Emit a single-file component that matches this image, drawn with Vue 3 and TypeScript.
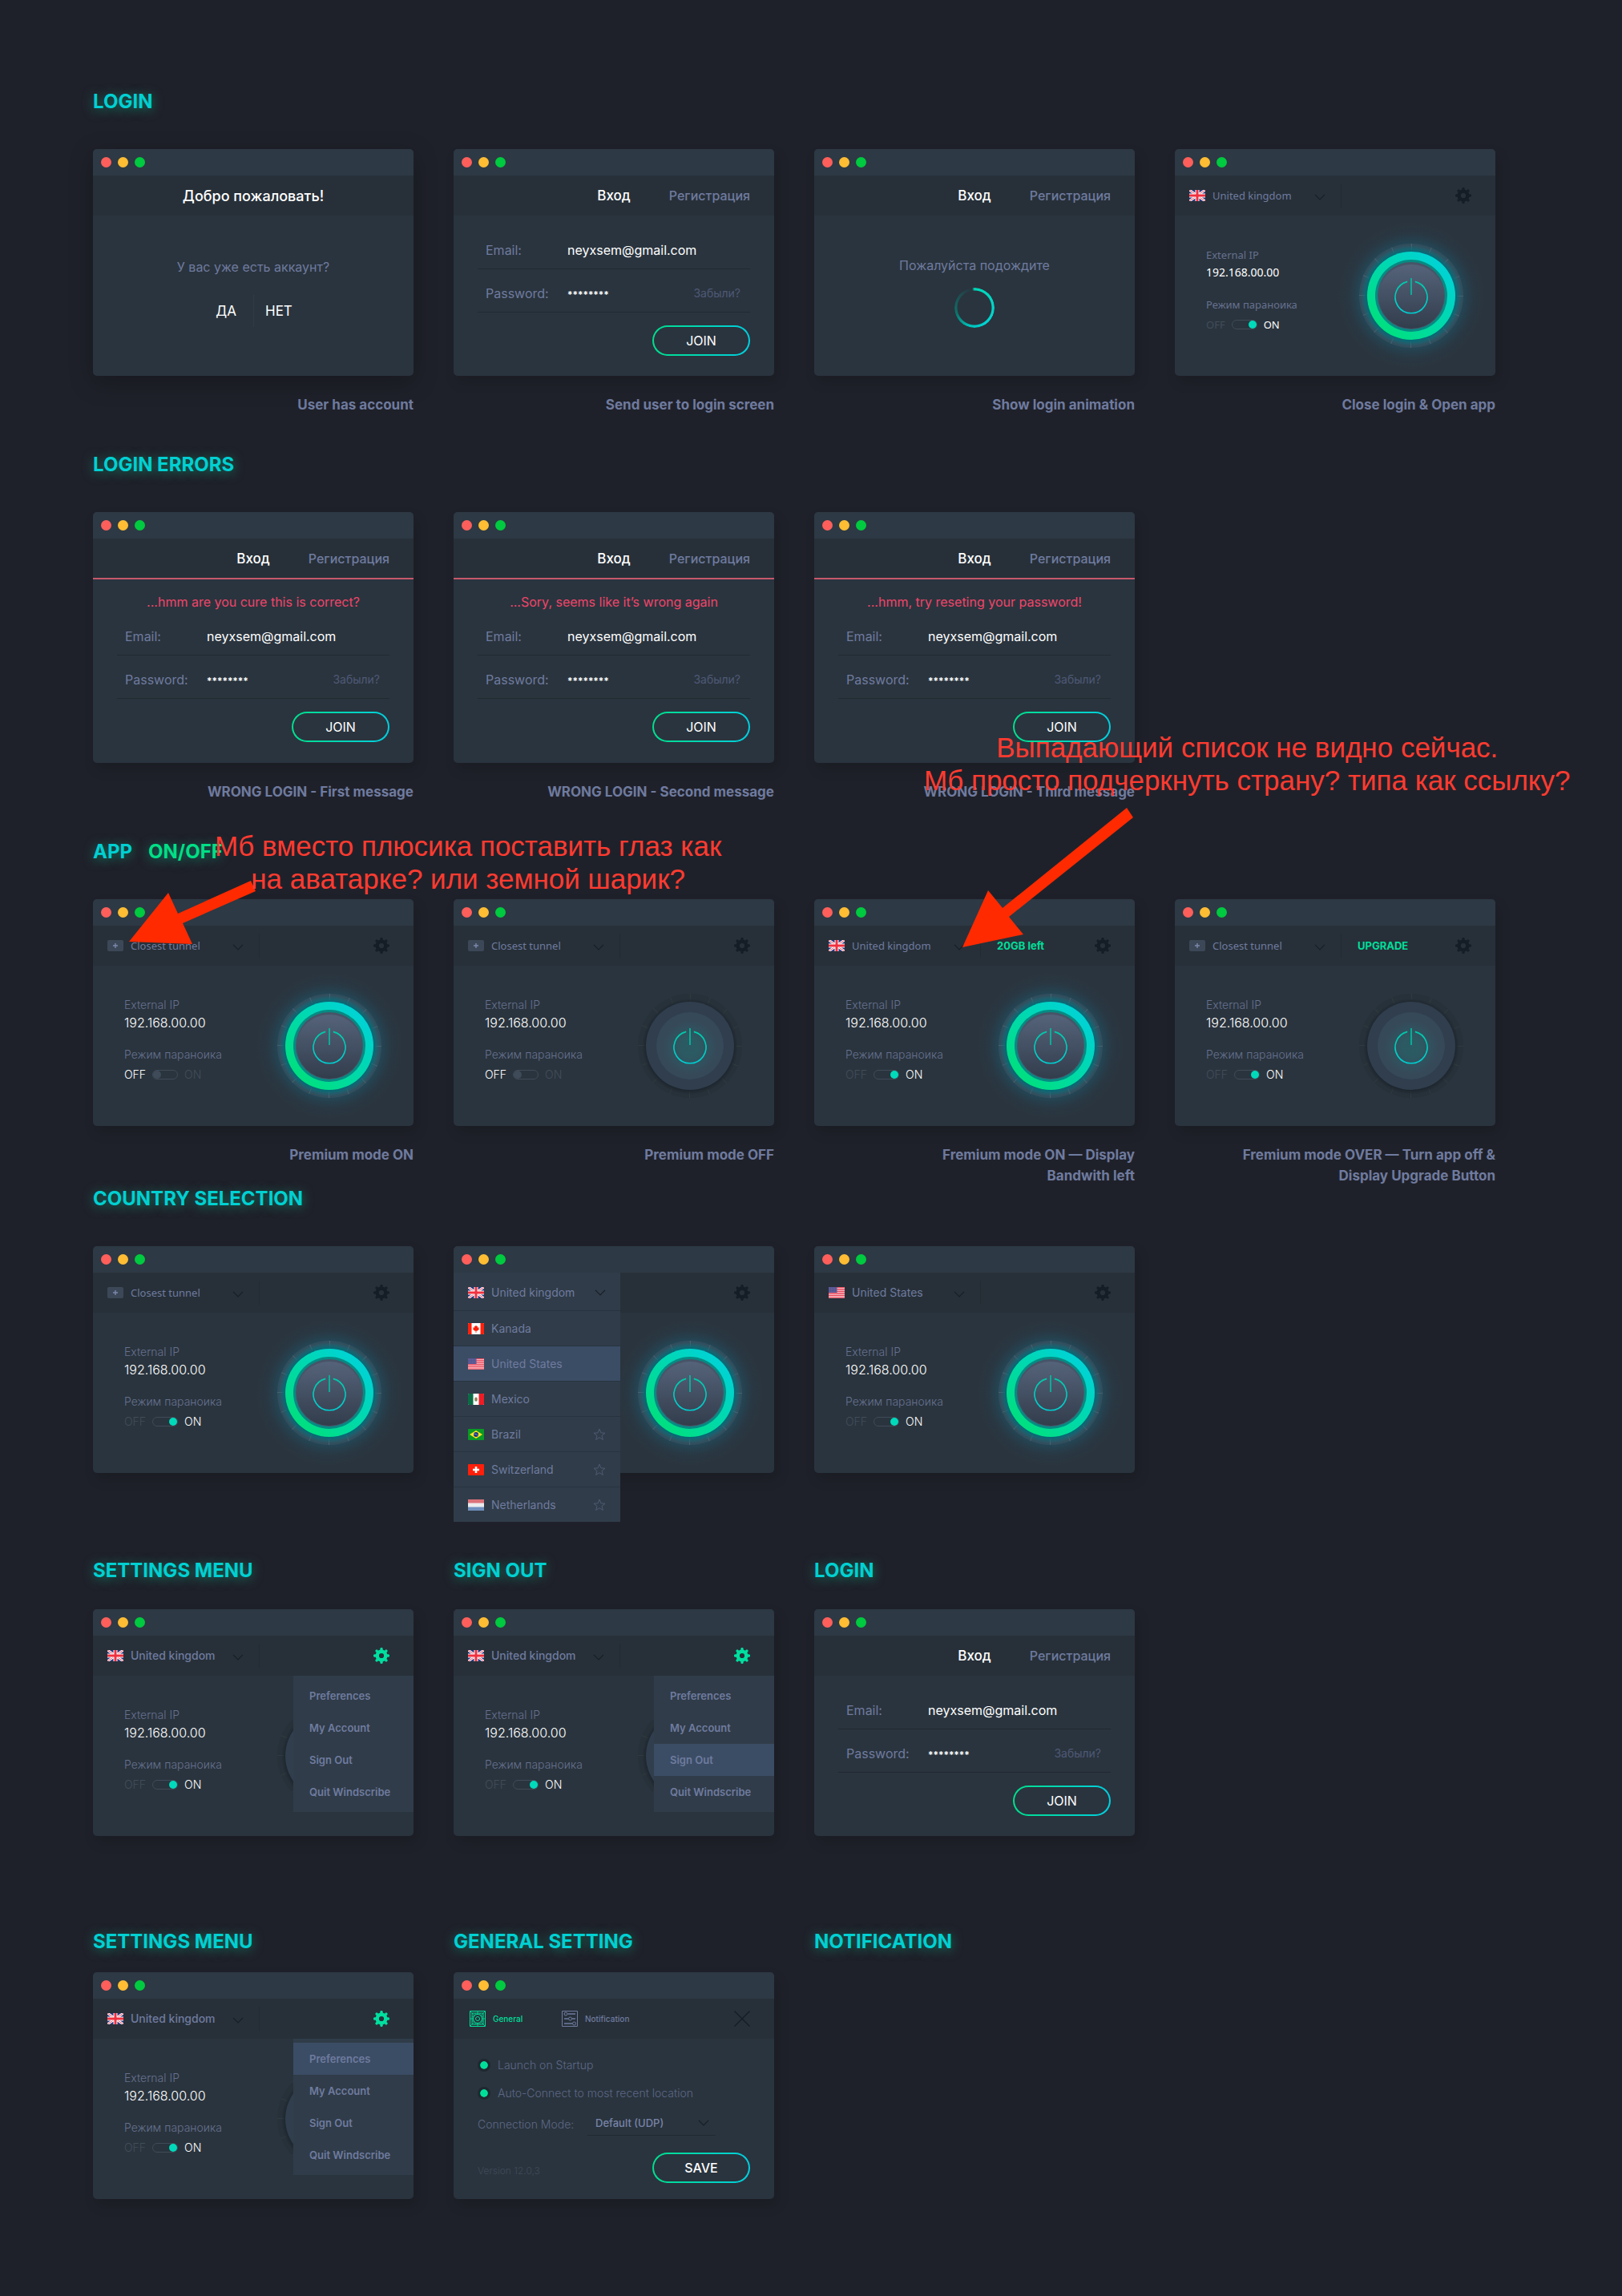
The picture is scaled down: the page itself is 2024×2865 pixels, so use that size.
<script setup lang="ts">
type Kind = 'welcome' | 'form' | 'loading' | 'app' | 'prefs'
type Note = 'plus' | 'country'

interface Win {
  id: string
  kind: Kind
  caption?: string
  error?: string
  flag?: string
  country?: string
  humanist?: boolean
  humanistLabel?: boolean
  semibold?: boolean
  power?: boolean
  paranoid?: boolean
  badge?: string
  settings?: boolean
  active?: string
  picker?: boolean
  note?: Note
}

interface Title {
  text: string
  accent?: string
}

interface Board {
  id: string
  cls: string
  titles: Title[]
  windows: Win[]
}

const menuItems: string[] = ['Preferences', 'My Account', 'Sign Out', 'Quit Windscribe']

const countries = [
  { flag: 'gb', name: 'United kingdom', star: false },
  { flag: 'ca', name: 'Kanada', star: false },
  { flag: 'us', name: 'United States', star: false },
  { flag: 'mx', name: 'Mexico', star: false },
  { flag: 'br', name: 'Brazil', star: true },
  { flag: 'ch', name: 'Switzerland', star: true },
  { flag: 'nl', name: 'Netherlands', star: true },
]

const boards: Board[] = [
  {
    id: 'login',
    cls: 'roomy',
    titles: [{ text: 'LOGIN' }],
    windows: [
      { id: 'w1', kind: 'welcome', caption: 'User has account' },
      { id: 'w2', kind: 'form', caption: 'Send user to login screen' },
      { id: 'w3', kind: 'loading', caption: 'Show login animation' },
      { id: 'w4', kind: 'app', caption: 'Close login & Open app', flag: 'gb', country: 'United kingdom', humanist: true, power: true, paranoid: true },
    ],
  },
  {
    id: 'errors',
    cls: 'roomy',
    titles: [{ text: 'LOGIN ERRORS' }],
    windows: [
      { id: 'e1', kind: 'form', error: '...hmm are you cure this is correct?', caption: 'WRONG LOGIN - First message' },
      { id: 'e2', kind: 'form', error: '...Sory, seems like it’s wrong again', caption: 'WRONG LOGIN - Second message' },
      { id: 'e3', kind: 'form', error: '...hmm, try reseting your password!', caption: 'WRONG LOGIN - Third message' },
    ],
  },
  {
    id: 'app',
    cls: 'tight',
    titles: [{ text: 'APP', accent: 'ON/OFF' }],
    windows: [
      { id: 'a1', kind: 'app', caption: 'Premium mode ON', flag: 'plus', country: 'Closest tunnel', humanistLabel: true, power: true, note: 'plus' },
      { id: 'a2', kind: 'app', caption: 'Premium mode OFF', flag: 'plus', country: 'Closest tunnel', humanistLabel: true },
      { id: 'a3', kind: 'app', caption: 'Fremium mode ON — Display Bandwith left', flag: 'gb', country: 'United kingdom', humanistLabel: true, power: true, paranoid: true, badge: '20GB left', note: 'country' },
      { id: 'a4', kind: 'app', caption: 'Fremium mode OVER — Turn app off & Display Upgrade Button', flag: 'plus', country: 'Closest tunnel', humanistLabel: true, paranoid: true, badge: 'UPGRADE' },
    ],
  },
  {
    id: 'country',
    cls: 'wide',
    titles: [{ text: 'COUNTRY SELECTION' }],
    windows: [
      { id: 'c1', kind: 'app', flag: 'plus', country: 'Closest tunnel', humanistLabel: true, power: true, paranoid: true },
      { id: 'c2', kind: 'app', flag: 'gb', country: 'United kingdom', power: true, paranoid: true, picker: true },
      { id: 'c3', kind: 'app', flag: 'us', country: 'United States', power: true, paranoid: true },
    ],
  },
  {
    id: 'signout',
    cls: 'wide near',
    titles: [{ text: 'SETTINGS MENU' }, { text: 'SIGN OUT' }, { text: 'LOGIN' }],
    windows: [
      { id: 's1', kind: 'app', flag: 'gb', country: 'United kingdom', semibold: true, paranoid: true, settings: true },
      { id: 's2', kind: 'app', flag: 'gb', country: 'United kingdom', semibold: true, paranoid: true, settings: true, active: 'Sign Out' },
      { id: 's3', kind: 'form' },
    ],
  },
  {
    id: 'general',
    cls: 'wide nearest',
    titles: [{ text: 'SETTINGS MENU' }, { text: 'GENERAL SETTING' }, { text: 'NOTIFICATION' }],
    windows: [
      { id: 'g1', kind: 'app', flag: 'gb', country: 'United kingdom', semibold: true, paranoid: true, settings: true, active: 'Preferences' },
      { id: 'g2', kind: 'prefs' },
    ],
  },
]
</script>

<template>
  <main class="page">
    <svg class="sprite" aria-hidden="true">
      <defs>
        <linearGradient id="ring-on" x1="0.2" y1="0.9" x2="0.85" y2="0.2">
          <stop offset="0" stop-color="#00df80" />
          <stop offset="1" stop-color="#00d3d2" />
        </linearGradient>
        <linearGradient id="disc-on" x1="0" y1="0" x2="0" y2="1">
          <stop offset="0" stop-color="#55637a" />
          <stop offset="1" stop-color="#323d4c" />
        </linearGradient>
        <linearGradient id="glyph" gradientUnits="userSpaceOnUse" x1="65" y1="42" x2="65" y2="88">
          <stop offset="0" stop-color="#00c9a4" />
          <stop offset="1" stop-color="#00cfd2" />
        </linearGradient>
        <radialGradient id="halo">
          <stop offset="0.6" stop-color="#16788f" stop-opacity="0.6" />
          <stop offset="0.72" stop-color="#1b6078" stop-opacity="0.36" />
          <stop offset="0.86" stop-color="#205568" stop-opacity="0.1" />
          <stop offset="1" stop-color="#205568" stop-opacity="0" />
        </radialGradient>
        <radialGradient id="rim">
          <stop offset="0.84" stop-color="#00636f" />
          <stop offset="0.9" stop-color="#006f7b" stop-opacity="0.7" />
          <stop offset="1" stop-color="#14707c" stop-opacity="0" />
        </radialGradient>
        <radialGradient id="rim-off">
          <stop offset="0.88" stop-color="#1b232b" />
          <stop offset="1" stop-color="#1b232b" stop-opacity="0" />
        </radialGradient>
        <radialGradient id="tint">
          <stop offset="0.3" stop-color="#00a08c" stop-opacity="0.2" />
          <stop offset="1" stop-color="#00a08c" stop-opacity="0" />
        </radialGradient>
        <clipPath id="flag-clip"><rect width="20" height="14" rx="1" /></clipPath>
      </defs>

      <symbol id="flag-gb" viewBox="0 0 20 14">
        <g clip-path="url(#flag-clip)">
          <rect width="20" height="14" fill="#28377f" />
          <path d="M0 0 20 14M20 0 0 14" stroke="#fff" stroke-width="3" />
          <path d="M0 0 20 14M20 0 0 14" stroke="#f0465a" stroke-width="1" />
          <path d="M10 0V14M0 7H20" stroke="#fff" stroke-width="5" />
          <path d="M10 0V14M0 7H20" stroke="#f0303f" stroke-width="3" />
        </g>
      </symbol>
      <symbol id="flag-ca" viewBox="0 0 20 14">
        <g clip-path="url(#flag-clip)">
          <rect width="20" height="14" fill="#fff" />
          <path d="M0 0H4.500V14H0zM15.500 0H20V14H15.500z" fill="#ff1f0a" />
          <path d="m10 2.500 1 1.800 1.200-.5-.3 2.200 1.900-.9-.5 2 .7.700-2.600 2H10.400V12H9.600V9.800H8.600L6 7.800l.7-.7-.5-2 1.900.9-.3-2.200 1.200.5z" fill="#ff1f0a" />
        </g>
      </symbol>
      <symbol id="flag-us" viewBox="0 0 20 14">
        <g clip-path="url(#flag-clip)">
          <rect width="20" height="14" fill="#fbd5da" />
          <path d="M0 .5H20M0 3H20M0 5.500H20M0 8H20M0 10.500H20M0 13.200H20" stroke="#e9475a" stroke-width="1.300" />
          <rect width="10.500" height="7" fill="#565490" />
          <path d="M1 1.500H10M1 3.500H10M1 5.500H10" stroke="#8684b5" stroke-width=".6" stroke-dasharray=".7 1.300" />
        </g>
      </symbol>
      <symbol id="flag-mx" viewBox="0 0 20 14">
        <g clip-path="url(#flag-clip)">
          <rect width="20" height="14" fill="#fff" />
          <rect width="6.500" height="14" fill="#0b6b45" />
          <rect x="13.500" width="6.500" height="14" fill="#ee1c25" />
          <ellipse cx="10" cy="7" rx="1.800" ry="2.400" fill="#9c7a54" />
          <path d="M8.600 8.500Q10 10 11.400 8.500" fill="none" stroke="#4b8a52" stroke-width=".8" />
        </g>
      </symbol>
      <symbol id="flag-br" viewBox="0 0 20 14">
        <g clip-path="url(#flag-clip)">
          <rect width="20" height="14" fill="#0a9a25" />
          <path d="M10 2 18 7 10 12 2 7z" fill="#ffe51e" />
          <circle cx="10" cy="7" r="3" fill="#17357f" />
          <path d="M7.200 6.300Q10 6 12.600 8" fill="none" stroke="#a9c4ee" stroke-width=".6" />
        </g>
      </symbol>
      <symbol id="flag-ch" viewBox="0 0 20 14">
        <g clip-path="url(#flag-clip)">
          <rect width="20" height="14" fill="#ff1f0a" />
          <path d="M10 3V11M6 7H14" stroke="#fff" stroke-width="2.600" />
        </g>
      </symbol>
      <symbol id="flag-nl" viewBox="0 0 20 14">
        <g clip-path="url(#flag-clip)">
          <rect width="20" height="14" fill="#ecebed" />
          <rect width="20" height="4.500" fill="#dc7179" />
          <rect y="9.500" width="20" height="4.500" fill="#6f8fbd" />
        </g>
      </symbol>
      <symbol id="flag-plus" viewBox="0 0 20 14">
        <rect width="20" height="14" rx="2" fill="#3c4857" />
        <path d="M10 4V10M7 7H13" stroke="#7c88ac" stroke-width="1.400" />
      </symbol>
      <symbol id="chevron" viewBox="0 0 14 8">
        <path d="m1 .8 6 6 6-6" fill="none" stroke="currentColor" stroke-width="1.200" />
      </symbol>
      <symbol id="gear" viewBox="0 0 20 20">
        <circle cx="10" cy="10" r="5.300" fill="none" stroke="currentColor" stroke-width="4.400" />
        <path
          d="M10 1.600V4M10 16V18.400M1.600 10H4M16 10H18.400M4.100 4.100l1.600 1.600M14.300 14.300l1.600 1.600M4.100 15.900l1.600-1.600M14.300 5.700l1.600-1.600"
          stroke="currentColor" stroke-width="3.400" stroke-linecap="round"
        />
      </symbol>
      <symbol id="star" viewBox="0 0 16 16">
        <path d="m8 1 1.900 4.900 5.100.3-4 3.300 1.400 5L8 11.700l-4.400 2.800 1.400-5-4-3.300 5.100-.3z" fill="none" stroke="currentColor" />
      </symbol>
    </svg>

    <section v-for="board in boards" :key="board.id" class="board" :class="board.cls">
      <div class="grid titles">
        <h2 v-for="title in board.titles" :key="title.text" class="title">
          {{ title.text }}<span v-if="title.accent" class="accent">{{ title.accent }}</span>
        </h2>
      </div>

      <div class="grid">
        <figure v-for="win in board.windows" :key="win.id" class="cell">
          <div class="window" :class="{ failed: win.error, lifted: win.kind === 'welcome', picking: win.picker }">
            <div class="bar"><i class="dot red" /><i class="dot amber" /><i class="dot green" /></div>

            <template v-if="win.kind === 'welcome'">
              <header class="head centered"><h3 class="welcome">Добро пожаловать!</h3></header>
              <div class="body stack">
                <p class="question">У вас уже есть аккаунт?</p>
                <div class="choices">
                  <button type="button">ДА</button>
                  <button type="button">НЕТ</button>
                </div>
              </div>
            </template>

            <template v-if="win.kind === 'form' || win.kind === 'loading'">
              <header class="head tabs">
                <a href="#login" class="tab current">Вход</a>
                <a href="#signup" class="tab">Регистрация</a>
              </header>
            </template>

            <div v-if="win.kind === 'loading'" class="body stack loading">
              <p class="question">Пожалуйста подождите</p>
              <div class="spinner" role="status" aria-label="Пожалуйста подождите" />
            </div>

            <form v-if="win.kind === 'form'" class="body form" @submit.prevent>
              <p v-if="win.error" class="error">{{ win.error }}</p>
              <div class="field">
                <label :for="win.id + '-email'">Email:</label>
                <input :id="win.id + '-email'" type="text" value="neyxsem@gmail.com">
              </div>
              <div class="field">
                <label :for="win.id + '-pass'">Password:</label>
                <input :id="win.id + '-pass'" class="secret" type="text" value="********">
                <a href="#forgot" class="forgot">Забыли?</a>
              </div>
              <button type="submit" class="pill">JOIN</button>
            </form>

            <template v-if="win.kind === 'app'">
              <header class="head" :class="{ humanist: win.humanist || win.humanistLabel, semibold: win.semibold }">
                <div class="country">
                  <svg class="flag"><use :href="'#flag-' + win.flag" /></svg>
                  <select :aria-label="'Tunnel ' + win.id"><option>{{ win.country }}</option></select>
                  <svg class="chevron"><use href="#chevron" /></svg>
                </div>
                <span v-if="win.badge" class="badge">{{ win.badge }}</span>
                <button type="button" class="gear" :class="{ lit: win.settings }" aria-label="Settings">
                  <svg><use href="#gear" /></svg>
                </button>
              </header>
              <div class="body app" :class="{ humanist: win.humanist }">
                <div class="info">
                  <span class="label">External IP</span>
                  <span class="ip">192.168.00.00</span>
                  <label class="label mode" :for="win.id + '-mode'">Режим параноика</label>
                  <div class="switch">
                    <span :class="{ on: !win.paranoid }">OFF</span>
                    <input :id="win.id + '-mode'" type="checkbox" :checked="win.paranoid">
                    <span :class="{ on: win.paranoid }">ON</span>
                  </div>
                </div>
                <button type="button" class="power" aria-label="Power">
                  <svg viewBox="0 0 130 130">
                    <template v-if="win.power">
                      <circle cx="65" cy="65" r="92" fill="url(#halo)" />
                      <circle cx="65" cy="65" r="65" fill="#3a5261" fill-opacity=".62" />
                    </template>
                    <circle v-else cx="65" cy="65" r="65" fill="#273138" fill-opacity=".7" />
                    <circle cx="65" cy="65" r="61" fill="none" :stroke="win.power ? '#466270' : '#303b40'" stroke-width="8" pathLength="384" stroke-dasharray="1 23" />
                    <template v-if="win.power">
                      <circle cx="65" cy="65" r="63" fill="url(#rim)" />
                      <circle cx="65" cy="65" r="55" fill="url(#ring-on)" />
                      <circle cx="65" cy="65" r="45" fill="#078a83" />
                      <circle cx="65" cy="65" r="42" fill="#475468" />
                      <ellipse cx="65" cy="66" rx="41" ry="40" fill="url(#disc-on)" />
                    </template>
                    <template v-else>
                      <circle cx="65" cy="66" r="60" fill="url(#rim-off)" />
                      <circle cx="65" cy="65" r="55" fill="#303e4e" />
                      <circle cx="65" cy="65" r="42" fill="#364959" />
                      <circle cx="65" cy="67" r="34" fill="url(#tint)" />
                    </template>
                    <path d="M60.200 47.400A20 20 0 1 0 69.800 47.400" fill="none" stroke="url(#glyph)" stroke-width="1.600" />
                    <path d="M64.200 43H65.800V64H64.200z" fill="#00c2a4" />
                  </svg>
                </button>
              </div>
              <ul v-if="win.settings" class="menu">
                <li v-for="item in menuItems" :key="item">
                  <button type="button" :class="{ active: item === win.active }">{{ item }}</button>
                </li>
              </ul>
              <ul v-if="win.picker" class="picker">
                <li v-for="c in countries" :key="c.flag" :class="{ chosen: c.flag === 'us' }">
                  <button type="button">
                    <svg class="flag"><use :href="'#flag-' + c.flag" /></svg>
                    <span>{{ c.name }}</span>
                    <svg v-if="c.flag === 'gb'" class="chevron"><use href="#chevron" /></svg>
                    <svg v-if="c.star" class="star"><use href="#star" /></svg>
                  </button>
                </li>
              </ul>
            </template>

            <template v-if="win.kind === 'prefs'">
              <header class="head sections">
                <button type="button" class="section current">
                  <svg viewBox="0 0 20 20" fill="none" stroke="currentColor">
                    <path d="M.5.5H19.500V19.500H.5zM3 3H17V17H3z" />
                    <circle cx="10" cy="10" r="2.500" />
                    <circle cx="10" cy="10" r="5.500" />
                    <path d="M10 1V5M10 15V19M1 10H5M15 10H19M1 1 6 6M14 14l5 5M19 1l-5 5M1 19l5-5M3 7H6M14 7H17M3 13H6M14 13H17M7 3V5M13 3V5M7 15V17M13 15V17" stroke-width=".8" />
                  </svg>
                  General
                </button>
                <button type="button" class="section">
                  <svg viewBox="0 0 20 20" fill="none" stroke="currentColor">
                    <path d="M.5.5H19.500V19.500H.5z" />
                    <path d="M7.500 4H17M3 4H3.500M3 10H8M13 10H17M3 16H13" stroke-width="1.600" />
                    <circle cx="5" cy="4" r="2" />
                    <circle cx="10.500" cy="10" r="2" />
                    <circle cx="15.500" cy="16" r="2" />
                  </svg>
                  Notification
                </button>
                <button type="button" class="close" aria-label="Close">
                  <svg viewBox="0 0 20 20"><path d="M.5.5l19 19M19.500.5l-19 19" stroke="currentColor" stroke-width="1.500" /></svg>
                </button>
              </header>
              <form class="body prefs" @submit.prevent>
                <label class="option"><input type="checkbox" checked>Launch on Startup</label>
                <label class="option"><input type="checkbox" checked>Auto-Connect to most recent location</label>
                <div class="connection">
                  <label for="connection-mode">Connection Mode:</label>
                  <span class="mode-box">
                    <select id="connection-mode"><option>Default (UDP)</option></select>
                    <svg class="chevron"><use href="#chevron" /></svg>
                  </span>
                </div>
                <div class="foot">
                  <span class="version">Version 12.0,3</span>
                  <button type="submit" class="pill save">SAVE</button>
                </div>
              </form>
            </template>
          </div>

          <figcaption v-if="win.caption" class="caption">{{ win.caption }}</figcaption>

          <template v-if="win.note === 'plus'">
            <svg class="arrow" viewBox="0 0 400 283"><path d="M45 53 94-8 106 18 197-23 203-10 112 30 124 56z" fill="#ff2a00" /></svg>
            <p class="note note-plus">Мб вместо плюсика поставить глаз как<br>на аватарке? или земной шарик?</p>
          </template>
          <template v-if="win.note === 'country'">
            <svg class="arrow" viewBox="0 0 400 283"><path d="M185 60 217-11 235 11 390-114 398-102 243 22 261 44z" fill="#ff2a00" /></svg>
            <p class="note note-country">Выпадающий список не видно сейчас.<br>Мб просто подчеркнуть страну? типа как ссылку?</p>
          </template>
        </figure>
      </div>
    </section>
  </main>
</template>

<style>
body {
  margin: 0;
  background: #1f212a;
}
</style>

<style scoped>
.page {
  box-sizing: border-box;
  padding: 114px 158px 12px 116px;
  background: #1f212a;
  color: #6f7b9f;
  font-family: Inter, "Noto Sans", sans-serif;
  font-size: 14px;
  overflow: hidden;
}

.page *,
.page *::before,
.page *::after {
  box-sizing: border-box;
}

.sprite {
  position: absolute;
  width: 0;
  height: 0;
}

button,
input,
select {
  appearance: none;
  margin: 0;
  padding: 0;
  border: 0;
  background: none;
  color: inherit;
  font: inherit;
  outline: none;
}

a {
  color: inherit;
  text-decoration: none;
}

p,
h2,
h3,
ul,
figure {
  margin: 0;
  padding: 0;
  list-style: none;
}

/* board rhythm */
.grid {
  display: grid;
  grid-template-columns: repeat(4, minmax(0, 1fr));
  gap: 50px;
}

.titles {
  margin-bottom: 46px;
}

.roomy { margin-bottom: 49px; }
.tight { margin-bottom: 3px; }
.wide { margin-bottom: 109px; }
.near { margin-bottom: 119px; }
.near .titles { margin-bottom: 35px; }
.nearest .titles { margin-bottom: 25px; }

.title {
  color: #00d0d2;
  font-size: 24px;
  line-height: 26px;
  font-weight: 700;
  white-space: nowrap;
  text-shadow: 0 2px 14px rgba(0, 224, 170, 0.5);
}

.accent {
  margin-left: 20px;
  color: #00df86;
}

.cell {
  position: relative;
}

.caption {
  margin-top: 23px;
  padding-left: 82px;
  font-size: 17px;
  line-height: 26px;
  font-weight: 700;
  text-align: right;
}

/* window chrome */
.window {
  position: relative;
  border-radius: 5px;
  background: #2a343e;
  box-shadow: 4px 8px 16px rgba(0, 0, 0, 0.14);
}

.lifted {
  box-shadow: 0 8px 30px rgba(0, 0, 0, 0.26);
}

.bar {
  display: flex;
  align-items: center;
  gap: 8px;
  height: 33px;
  padding-left: 10px;
  border-radius: 5px 5px 0 0;
  background: #2d3944;
}

.dot {
  width: 13px;
  height: 13px;
  border-radius: 50%;
}

.red { background: #ff5f5b; }
.amber { background: #ffbd33; }
.green { background: #00ca3f; }

.head {
  display: flex;
  align-items: center;
  height: 50px;
  padding-right: 30px;
  background: #273039;
}

.body {
  min-height: 200px;
}

.centered {
  justify-content: center;
  padding: 0;
}

.welcome {
  color: #fff;
  font-size: 18px;
  font-weight: 500;
}

.stack {
  display: flex;
  flex-direction: column;
  align-items: center;
  padding-top: 54px;
}

.question {
  font-size: 16px;
  line-height: 20px;
}

.choices {
  display: grid;
  grid-template-columns: 1fr 1fr;
  margin-top: 25px;
  color: #fff;
  font-size: 17px;
}

.choices button {
  height: 40px;
  padding: 0 21px 0 14px;
  text-align: right;
}

.choices button + button {
  padding: 0 21px 0 14px;
  border-left: 1px solid #2f3a45;
  text-align: left;
}

.tabs {
  display: grid;
  grid-template-columns: 1fr auto 1fr;
  padding: 0 30px;
}

.tab {
  justify-self: end;
  font-size: 16px;
  font-weight: 500;
}

.tab.current {
  grid-column: 2;
  color: #fff;
  font-size: 17px;
}

.failed .head {
  height: 51px;
  border-bottom: 2px solid #c6586a;
}

.loading {
  padding-top: 52px;
}

.spinner {
  width: 50px;
  height: 50px;
  margin-top: 18px;
  border-radius: 50%;
  background: conic-gradient(#00d8b8, #00d3d2 40%, #00c0b8 55%, rgba(0, 140, 125, 0.7) 70%, rgba(0, 140, 125, 0) 98%, #00d8b8);
  mask: radial-gradient(closest-side, transparent 21px, #000 22px);
}

/* login form */
.form {
  display: flex;
  flex-direction: column;
  padding: 13px 30px 25px;
}

.failed .form {
  padding: 12px 30px 26px;
}

.error {
  margin: 6px 0 3px;
  color: #f0456a;
  font-size: 16px;
  line-height: 20px;
  text-align: center;
  white-space: nowrap;
}

.field {
  display: flex;
  align-items: flex-end;
  height: 54px;
  padding: 0 12px 13px 10px;
  border-bottom: 1px solid #212930;
  font-size: 16px;
  line-height: 20px;
}

.field label {
  width: 102px;
}

.field input {
  flex: 1;
  min-width: 0;
  height: 20px;
  color: #fff;
}

.field .secret {
  height: 17px;
  font-size: 12px;
  font-weight: 600;
}

.forgot {
  color: #4e5976;
  font-size: 14px;
}

.pill {
  align-self: flex-end;
  width: 122px;
  height: 38px;
  margin-top: 16px;
  border: 2px solid transparent;
  border-radius: 19px;
  background:
    linear-gradient(#2a343e, #2a343e) padding-box,
    linear-gradient(90deg, #00df8c, #00cfe0) border-box;
  color: #fff;
  font-size: 16px;
}

/* vpn screen */
.country {
  display: flex;
  align-items: center;
  width: 208px;
  height: 30px;
  padding: 0 19px 0 18px;
  border-right: 1px solid #222a32;
}

.flag {
  flex: none;
  width: 20px;
  height: 14px;
}

.country select {
  flex: 1;
  min-width: 0;
  margin-left: 9px;
  line-height: 20px;
}

.chevron {
  flex: none;
  width: 14px;
  height: 8px;
  color: #171e25;
}

.country .chevron {
  margin-top: 4px;
}

.humanist {
  font-family: "Noto Sans", sans-serif;
}

.humanist select {
  font-size: 13px;
}

.semibold {
  font-weight: 500;
}

.badge {
  margin-left: 20px;
  color: #00df9a;
  font-family: Inter, sans-serif;
  font-size: 13px;
  font-weight: 700;
}

.gear,
.close {
  width: 20px;
  height: 20px;
  margin-left: auto;
  color: #151d26;
}

.lit {
  color: #00df9f;
}

.gear svg,
.close svg {
  display: block;
  width: 20px;
  height: 20px;
}

.app {
  display: flex;
  justify-content: space-between;
  align-items: flex-start;
  padding: 35px 40px 0 39px;
}

.info {
  display: flex;
  flex-direction: column;
  padding-top: 5px;
  white-space: nowrap;
}

/* the open list takes the place of the details */
.picking .info,
.picking .country {
  visibility: hidden;
}

.label {
  color: #66718f;
  font-size: 14px;
  line-height: 18px;
  font-weight: 300;
}

.ip {
  margin-top: 2px;
  color: #fff;
  font-size: 16px;
  line-height: 22px;
  font-weight: 300;
}

.mode {
  margin-top: 20px;
}

.switch {
  display: flex;
  align-items: center;
  gap: 8px;
  margin-top: 8px;
  color: #414d5a;
  font-size: 14px;
  line-height: 16px;
  font-weight: 300;
}

.switch .on {
  color: #fff;
}

.humanist .label,
.humanist .switch {
  font-size: 13px;
  font-weight: 400;
}

.humanist .ip {
  font-size: 14px;
  font-weight: 400;
}

.switch input {
  display: flex;
  align-items: center;
  width: 32px;
  height: 12px;
  border: 1px solid #3f4b59;
  border-radius: 6px;
}

.switch input::before {
  content: "";
  width: 10px;
  height: 10px;
  border-radius: 50%;
  background: #3f4b59;
}

.switch input:checked::before {
  margin-left: auto;
  background: #00dabb;
}

.power {
  flex: none;
  width: 130px;
  height: 130px;
}

.power svg {
  display: block;
  overflow: visible;
}

.menu {
  position: absolute;
  top: 83px;
  right: 0;
  width: 150px;
  padding: 5px 0;
  background: #303c49;
}

.menu button {
  display: block;
  width: 100%;
  height: 40px;
  padding-left: 20px;
  font-size: 13px;
  font-weight: 600;
  text-align: left;
}

.menu .active {
  background: #3b4d65;
}

.picker {
  position: absolute;
  top: 33px;
  left: 0;
  width: 208px;
  background: #303c49;
}

.picker li {
  border-bottom: 1px solid #283340;
}

.picker li:last-child {
  border-bottom: 0;
}

.picker button {
  display: flex;
  align-items: center;
  width: 100%;
  height: 43px;
  padding: 0 18px;
  text-align: left;
}

.picker li:first-child button {
  height: 47px;
  padding-top: 2px;
}

.picker span {
  margin: 0 auto 0 9px;
}

.star {
  width: 16px;
  height: 16px;
  color: #4d5a72;
}

.chosen {
  background: #3b4d65;
}

/* preferences */
.sections {
  padding-left: 20px;
}

.section {
  display: flex;
  align-items: center;
  gap: 9px;
  width: 115px;
  font-size: 10px;
  font-weight: 500;
}

.section svg {
  width: 20px;
  height: 20px;
}

.section.current {
  color: #00df9a;
}

.prefs {
  display: flex;
  flex-direction: column;
  padding: 23px 30px 20px;
  color: #5d6886;
  font-size: 14px;
  line-height: 20px;
  font-weight: 300;
}

.option {
  display: flex;
  align-items: center;
  gap: 9px;
  height: 20px;
  margin-bottom: 15px;
}

.option input {
  width: 16px;
  height: 16px;
  border: 3px solid #1f2830;
  border-radius: 50%;
  background: #1f2830;
}

.option input:checked {
  background: #00df9a padding-box;
}

.connection {
  display: flex;
  align-items: flex-end;
  justify-content: space-between;
  margin-right: 43px;
}

.connection label {
  padding-bottom: 4px;
}

.mode-box {
  display: flex;
  align-items: center;
  width: 160px;
  height: 28px;
  padding: 0 8px 4px 10px;
  border-bottom: 1px solid #212930;
  color: #7884a8;
  font-size: 13px;
  font-weight: 500;
}

.mode-box select {
  flex: 1;
}

.foot {
  display: flex;
  align-items: flex-start;
  justify-content: space-between;
  margin-top: 21px;
}

.version {
  margin-top: 13px;
  color: #3f4a5b;
  font-size: 12px;
}

.save {
  margin-top: 0;
  font-weight: 500;
}

/* review notes drawn over the boards */
.arrow {
  position: absolute;
  top: 0;
  left: 0;
  width: 400px;
  height: 283px;
  overflow: visible;
  pointer-events: none;
}

.note {
  position: absolute;
  color: #ff3b30;
  font-family: "Liberation Sans", Arial, sans-serif;
  font-size: 35px;
  line-height: 41px;
  text-align: center;
  white-space: nowrap;
}

.note-plus {
  top: -87px;
  left: 152px;
}

.note-country {
  top: -210px;
  left: 137px;
}
</style>
